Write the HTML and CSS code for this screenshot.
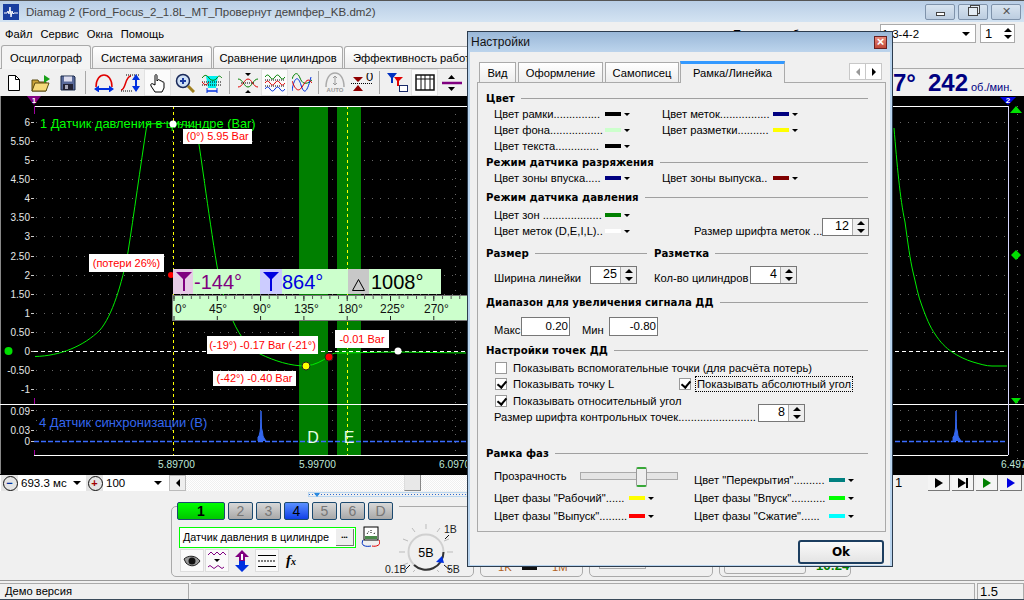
FILE: index.html
```html
<!DOCTYPE html>
<html lang="ru">
  <head>
    <meta charset="UTF-8" />
    <title>Diamag 2</title>
    <link rel="stylesheet" href="styles.css">
  </head>
  <body>
    <div class="app">
      <!-- Main window caption -->
      <div class="titlebar">
        <svg class="app-icon" width="16" height="16" viewBox="0 0 16 16">
          <rect width="16" height="16" fill="#1a3fa0" />
          <path d="M1 9h3l1-2 1 3 1-7 1 10 1-6 1 3 1-1h4" fill="none" stroke="#fff" stroke-width="1" />
        </svg>
        <span class="app-name">Diamag 2 (Ford_Focus_2_1.8L_MT_Провернут демпфер_KB.dm2)</span>
        <div class="caption-btns">
          <span class="cap-btn"><i class="cap-min"></i></span>
          <span class="cap-btn"><i class="cap-max"></i></span>
          <span class="cap-btn cap-close">✕</span>
        </div>
      </div>

      <div class="menubar">
        <span>Файл</span><span>Сервис</span><span>Окна</span><span>Помощь</span>
        <span class="order-label">Порядок работы</span>
        <div class="combo order-combo">1-3-4-2<i class="arrow-down"></i></div>
        <div class="combo cyl-spin">1<b class="mini-spin"><i class="tri-up"></i><i class="tri-down"></i></b></div>
      </div>

      <div class="tabs">
        <div class="tab active">Осциллограф</div>
        <div class="tab t-ign">Система зажигания</div>
        <div class="tab t-cmp">Сравнение цилиндров</div>
        <div class="tab t-eff">Эффективность работы</div>
      </div>

      <!-- Toolbar -->
      <div class="toolbar">
        <span class="tb"><svg width="14" height="16" viewBox="0 0 14 16"><path d="M1.5.5h7l4 4v11h-11z" fill="#fff" stroke="#000"/><path d="M8.5.5v4h4" fill="none" stroke="#000"/></svg></span>
        <span class="tb"><svg width="20" height="18" viewBox="0 0 20 18"><path d="M1 6h6l1 2h7v9H1z" fill="#c9a23a" stroke="#5a4a10"/><path d="M1 17l3-8h14l-3 8z" fill="#f5d97a" stroke="#5a4a10"/><path d="M13 1v8l6-4z" fill="#18a018"/></svg></span>
        <span class="tb"><svg width="16" height="16" viewBox="0 0 16 16"><path d="M1 1h13l1 1v13H1z" fill="#5a6a9a" stroke="#1a2a4a"/><rect x="4" y="1.500" width="8" height="5" fill="#dde"/><rect x="3" y="9" width="10" height="6" fill="#223"/><rect x="5" y="10" width="3" height="4" fill="#aab"/></svg></span>
        <i class="tb-sep"></i>
        <span class="tb"><svg width="20" height="18" viewBox="0 0 20 18"><path d="M2 13C2 5 6 1 10 1s8 4 8 12" fill="none" stroke="#e00000" stroke-width="1.500"/><path d="M2 15h16" stroke="#0030e0" stroke-width="2"/><path d="M0 15l5-3.500v7zM20 15l-5-3.500v7z" fill="#0030e0"/></svg></span>
        <span class="tb"><svg width="22" height="20" viewBox="0 0 22 20"><path d="M1 17c5 0 4-14 10-14" fill="none" stroke="#e00000" stroke-width="1.500"/><path d="M6 2h14M1 18h12" stroke="#000" stroke-dasharray="1 1"/><path d="M16 5v10" stroke="#0030e0" stroke-width="2"/><path d="M16 1l-4 6h8zM16 19l-4-6h8z" fill="#0030e0"/></svg></span>
        <span class="tb tb-on"><svg width="18" height="20" viewBox="0 0 18 20"><path d="M6 12V3c0-2 2-2 2 0v5l1-1c1-1 2 0 2 1 1-1 2 0 2 1 1-.500 2 0 2 1v5l-2 4H6l-4-6c-1-2 1-3 2-2z" fill="#fff" stroke="#000"/></svg></span>
        <span class="tb"><svg width="20" height="20" viewBox="0 0 20 20"><circle cx="8" cy="8" r="6.500" fill="#cfe0f5" stroke="#1a2a5a" stroke-width="1.500"/><path d="M5 8h6M8 5v6" stroke="#1a3aa0" stroke-width="2"/><path d="M13 13l6 6" stroke="#a08020" stroke-width="3"/></svg></span>
        <span class="tb"><svg width="20" height="20" viewBox="0 0 20 20"><path d="M4 3h12l-2 12H6z" fill="#00f0f0"/><path d="M0 5c3-4 5-3 7 0s6 3 8 0 3-2 5 0" fill="none" stroke="#008000"/><path d="M0 9h20M0 12h20" stroke="#000" stroke-dasharray="1 1"/><path d="M0 9c3 4 5 3 7 0" fill="none" stroke="#e00000"/><path d="M5 18h10" stroke="#0030e0" stroke-width="1.500"/><path d="M5 15v5M15 15v5" stroke="#0030e0"/></svg></span>
        <i class="tb-sep"></i>
        <span class="tb"><svg width="20" height="20" viewBox="0 0 20 20"><path d="M0 6c5 0 6 8 10 8s5-8 10-8" fill="none" stroke="#008000"/><path d="M0 14c5 0 6-8 10-8s5 8 10 8" fill="none" stroke="#e00000"/><path d="M3 10h14" stroke="#000" stroke-dasharray="1 1"/><path d="M7 0h6l-3 3zM7 20h6l-3-3z" fill="#000"/></svg></span>
        <span class="tb tb-on"><svg width="20" height="20" viewBox="0 0 20 20"><path d="M0 4q2.500-4 5 0t5 0 5 0 5 0" fill="none" stroke="#008000"/><path d="M0 10q2.500-4 5 0t5 0 5 0 5 0" fill="none" stroke="#e00000"/><path d="M0 16q2.500-4 5 0t5 0 5 0 5 0" fill="none" stroke="#0030e0"/><path d="M0 7h20M0 13h20" stroke="#000" stroke-dasharray="1 1"/></svg></span>
        <span class="tb"><svg width="20" height="20" viewBox="0 0 20 20"><path d="M0 6c3-8 6-6 8-1s5 8 12 2" fill="none" stroke="#008000"/><path d="M0 18C2 4 6 2 9 12s6 8 10-8" fill="none" stroke="#0030e0"/><path d="M0 8c3 8 6 12 10 6s6-10 10-4" fill="none" stroke="#e00000"/></svg></span>
        <i class="tb-sep tb-sep-narrow"></i>
        <span class="tb"><svg width="20" height="21" viewBox="0 0 20 21"><path d="M1 15C1 6 5 1 10 1s9 5 9 14" fill="none" stroke="#aaa" stroke-width="1.500"/><path d="M10 4v9M8 6l2-2 2 2M8 11l2 2 2-2" fill="none" stroke="#999"/><text class="auto-text" x="10" y="20">AUTO</text></svg></span>
        <span class="tb tb-zero"><svg width="22" height="20" viewBox="0 0 22 20"><path d="M2 4h10l-5 5zM2 18h10l-5-6z" fill="#900000"/><path d="M0 10.500h22" stroke="#000" stroke-dasharray="1 1"/><text class="zero-text" x="15" y="8">0</text></svg></span>
        <i class="tb-sep"></i>
        <span class="tb"><svg width="22" height="22" viewBox="0 0 22 22"><path d="M0 1h10L6 6v5H4V6z" fill="#0030c0"/><path d="M7 5h9l-4 4v5h-2V9z" fill="#e00000"/><rect x="12.500" y="13.500" width="8" height="6" fill="#fff" stroke="#1a2a6a"/></svg></span>
        <span class="tb tb-on"><svg width="20" height="17" viewBox="0 0 20 17"><rect x="1" y="1" width="18" height="15" fill="#fff" stroke="#111" stroke-width="1.500"/><path d="M1 5h18M6 1v15M10 1v15M15 1v15" stroke="#111"/></svg></span>
        <span class="tb"><svg width="20" height="20" viewBox="0 0 20 20"><path d="M0 10h20" stroke="#800080" stroke-width="2.500"/><path d="M6 6h7l-3.500-4zM6 14h7l-3.500 4z" fill="#000"/></svg></span>
        <div class="rpm"><b class="rpm-a">7°</b><b class="rpm-b">242</b><span>об./мин.</span></div>
      </div>

      <!-- Oscillogram -->
      <svg class="chart" width="1024" height="378" viewBox="0 97 1024 378">
        <defs>
          <pattern id="tickSmall" x="173.500" y="0" width="8.660" height="400" patternUnits="userSpaceOnUse">
            <path d="M.5 0v400" stroke="#555" />
          </pattern>
          <pattern id="tickBig" x="173.500" y="0" width="43.300" height="400" patternUnits="userSpaceOnUse">
            <path d="M.5 0v400" stroke="#222" />
          </pattern>
        </defs>
        <rect x="0" y="97" width="1024" height="378" fill="#000" />
        <rect x="0" y="97" width="1" height="378" fill="#888" />

        <g class="grid">
          <path d="M36 123.500H1005M36 142.500H1005M36 161.500H1005M36 180.500H1005M36 199.500H1005M36 218.500H1005M36 237.500H1005M36 257.500H1005M36 276.500H1005M36 295.500H1005M36 314.500H1005M36 333.500H1005M36 371.500H1005M36 390.500H1005M36 411.500H1005M36 421.500H1005M36 431.500H1005" />
          <path d="M455.500 107V456M1017.500 107V470" />
        </g>

        <rect x="299" y="107" width="29" height="349" fill="#007f00" />
        <rect x="337" y="107" width="24" height="349" fill="#007f00" />

        <path d="M173.500 107V456M347.500 107V456" class="dash-yellow" />
        <path d="M34 352.500H1005" class="dash-white" />
        <path d="M34 442.500H1005" class="dash-blue" />

        <path d="M34 107.500H1008M0 405.500H1024M34 456.500H1008" class="frame" />
        <path d="M1008.500 107V456" class="frame-right" />
        <path d="M34.500 107v8M34.500 399v6M34.500 451v5" class="frame-purple" />
        <path d="M31 123.500h3M31 142.500h3M31 161.500h3M31 180.500h3M31 199.500h3M31 218.500h3M31 237.500h3M31 257.500h3M31 276.500h3M31 295.500h3M31 314.500h3M31 333.500h3M31 352.500h3M31 371.500h3M31 390.500h3M31 411.500h3M31 431.500h3M31 442.500h3" class="ticks" />

        <path d="M27 97h14l-7 9z" fill="#800080" />
        <text x="34" y="103.500" class="flag-num">1</text>
        <path d="M1000 98h16l-8 8z" fill="#0000e0" />
        <text x="1008" y="104" class="flag-num">2</text>

        <g class="ylabels">
          <text x="30" y="127">6</text>
          <text x="30" y="146">5.50</text>
          <text x="30" y="165">5</text>
          <text x="30" y="184">4.50</text>
          <text x="30" y="203">4</text>
          <text x="30" y="222">3.50</text>
          <text x="30" y="241">3</text>
          <text x="30" y="261">2.50</text>
          <text x="30" y="280">2</text>
          <text x="30" y="299">1.50</text>
          <text x="30" y="318">1</text>
          <text x="30" y="337">0.50</text>
          <text x="30" y="356">0</text>
          <text x="30" y="375">-0.50</text>
          <text x="30" y="394">-1</text>
          <text x="30" y="416">0.09</text>
          <text x="30" y="435">0.03</text>
          <text x="30" y="446">0</text>
        </g>
        <g class="xlabels">
          <text x="158" y="469">5.89700</text>
          <text x="299" y="469">5.99700</text>
          <text x="439" y="469">6.09700</text>
          <text x="1001" y="469">6.497</text>
        </g>

        <text x="40" y="129" class="legend-green">1 Датчик давления в цилиндре (Bar)</text>
        <text x="39" y="428" class="legend-blue">4 Датчик синхронизации (B)</text>

        <path class="curve" d="M35 357.500C60 357 84 347 100 331C112 317 122 285 128 253C134 215 140 170 147 125L173 124L196 128C200 147 208 213 217 267C222 295 228 312 233 322C240 338 250 350 260 355C275 362 290 367 306 367C315 366 322 362 328 358C331 355 334 354 337 354L397 353L466 354" />
        <path class="curve" d="M894 129C897 165 900 200 905 223C908 245 910 260 913 273C916 285 918 297 922 307C926 318 930 328 935 335C940 343 946 349 952 353C958 357 966 361 973 363C980 365 986 367 992 367L1007 367" />

        <path class="pulse" d="M258 442v-4l1-1 1-4 .5-4 .5-17 .5 17 1 4 .5 4 1 2 2 3" />
        <path class="pulse" d="M953 442v-4l1-1 1-4 .5-4 .5-17 .5 17 1 4 .5 4 1 2 2 3" />

        <circle cx="8.500" cy="352" r="4" fill="#00e000" />
        <path d="M1016 107l6 7h-12zM1016 251l5 5-5 5-5-5zM1016 405l-5-6h10z" fill="#00e000" />

        <text x="313" y="444" class="zone-letter">D</text>
        <text x="349" y="444" class="zone-letter">E</text>

        <g class="mark-box">
          <rect x="183" y="130" width="69" height="15" />
          <rect x="89" y="255" width="75" height="18" />
          <rect x="207" y="337" width="111" height="18" />
          <rect x="335" y="331" width="54" height="18" />
          <rect x="213" y="372" width="83" height="15" />
        </g>
        <g class="mark-text">
          <text x="217.500" y="141">(0°) 5.95 Bar</text>
          <text x="126.500" y="268">(потери 26%)</text>
          <text x="262.500" y="350">(-19°) -0.17 Bar (-21°)</text>
          <text x="362" y="344">-0.01 Bar</text>
          <text x="254.500" y="383">(-42°) -0.40 Bar</text>
        </g>

        <circle cx="173" cy="125" r="3.500" fill="#fff" />
        <circle cx="306" cy="367" r="4" fill="#ffff00" stroke="#222" />
        <circle cx="329" cy="358" r="4" fill="#ff0000" stroke="#222" />
        <circle cx="398" cy="352" r="3.500" fill="#fff" />
        <circle cx="171" cy="276" r="3" fill="#ff0000" />

        <!-- degree ruler -->
        <rect x="173" y="270" width="268" height="25" fill="#ccffcc" />
        <rect x="173" y="270" width="20" height="25" fill="#e6cce6" />
        <rect x="260" y="270" width="22" height="25" fill="#ccccff" />
        <rect x="348" y="270" width="21" height="25" fill="#c8c8c8" />
        <path d="M176 273h16l-7 7v12h-2v-12z" fill="#800080" />
        <path d="M263 273h16l-7 7v12h-2v-12z" fill="#0000e0" />
        <path d="M352.500 291.500l6-11 6 11z" fill="none" stroke="#000" />
        <text x="194" y="290" class="info info-p">-144°</text>
        <text x="282" y="290" class="info info-b">864°</text>
        <text x="371" y="290" class="info info-k">1008°</text>

        <rect x="172.500" y="296.500" width="295" height="25" fill="#ccffcc" stroke="#777" />
        <rect x="173" y="297" width="294" height="3" fill="url(#tickSmall)" />
        <rect x="173" y="297" width="294" height="5" fill="url(#tickBig)" />
        <rect x="173" y="317" width="294" height="4" fill="url(#tickBig)" />
        <g class="ruler-text">
          <text x="175" y="314">0°</text>
          <text x="209" y="314">45°</text>
          <text x="253" y="314">90°</text>
          <text x="294" y="314">135°</text>
          <text x="338" y="314">180°</text>
          <text x="380" y="314">225°</text>
          <text x="424" y="314">270°</text>
        </g>
      </svg>

      <!-- Time scale / scroll -->
      <div class="scrollrow">
        <span class="round-btn minus">−</span>
        <div class="combo-flat w-time">693.3 мс<i class="arrow-down"></i></div>
        <span class="round-btn plus">+</span>
        <div class="combo-flat w-pct">100<i class="arrow-down"></i></div>
        <span class="sb-btn"><i class="tri-left"></i></span>
        <div class="track"><span class="thumb"></span></div>
        <span class="page-no">1</span>
        <div class="players">
          <span class="play"><i class="tri-play"></i></span>
          <span class="play"><i class="tri-play"></i><i class="bar"></i></span>
          <span class="play"><i class="tri-play green"></i></span>
          <span class="play"><i class="tri-play blue"></i></span>
        </div>
      </div>

      <div class="lower">
        <div class="range-strip"><i class="tri-strip"></i></div>
        <div class="groups">
          <div class="group g-chan">
            <div class="chan-col">
              <div class="channels">
                <span class="chan first">1</span>
                <span class="chan">2</span>
                <span class="chan">3</span>
                <span class="chan on">4</span>
                <span class="chan">5</span>
                <span class="chan">6</span>
                <span class="chan">D</span>
              </div>
              <div class="sensor-row">
                <div class="sensor">Датчик давления в цилиндре<span class="dots">•••</span></div>
                <svg width="20" height="22" viewBox="0 0 20 22"><rect x="4" y="1" width="14" height="13" fill="#fff" stroke="#000"/><path d="M5 13h12v-3H5z" fill="#4a8a4a"/><path d="M7 8l2-3M11 4v3M14 8l1-2" stroke="#000" stroke-dasharray="1 1"/><path d="M3 14c-3 6 3 7 8 6" fill="none" stroke="#0030c0"/><path d="M19 14c3 5-3 7-7 6" fill="none" stroke="#e00000"/></svg>
              </div>
              <div class="ch-tools">
                <span class="ch-tool on"><svg width="18" height="14" viewBox="0 0 18 14"><path d="M1 5c4-4 12-4 16 2-4 6-10 6-14 2z" fill="#999" stroke="#222"/><circle cx="9" cy="7" r="3.500" fill="#111"/></svg></span>
                <span class="ch-tool on"><svg width="20" height="20" viewBox="0 0 20 20"><path d="M1 4l3-3 3 3 3-3 3 3 3-3 3 3M1 16q2-3 4 0t4 0 4 0 4 0" fill="none" stroke="#800080"/><path d="M7 8h6l-3 3z" fill="#000"/></svg></span>
                <span class="ch-tool"><svg width="18" height="22" viewBox="0 0 18 22"><path d="M9 0l7 7h-4v4H6V7H2z" fill="#800080"/><path d="M9 22l7-7h-4v-4H6v4H2z" fill="#0030e0"/><path d="M8 4h2v6H8z" fill="#fff"/></svg></span>
                <span class="ch-tool on"><svg width="20" height="16" viewBox="0 0 20 16"><path d="M1 2.500h18M1 13.500h18" stroke="#000"/><path d="M1 8h18" stroke="#000" stroke-dasharray="2 1"/></svg></span>
                <span class="fx">f<small>x</small></span>
              </div>
            </div>
            <svg class="knob" width="92" height="66" viewBox="381 514 92 66">
              <path d="M426 530v-5M415 533l-3-4M437 533l3-4M408 542l-5-2M444 542l5-2M405 553h-6M447 553h6M408 564l-5 2M415 571l-2 2M437 571l2 2" stroke="#bbb" />
              <path d="M445 540l4-4M444 566l6 5M410 566l-4 4" stroke="#111" />
              <circle cx="426" cy="553" r="17.500" fill="none" stroke="#d0d0d0" stroke-width="2" />
              <path d="M443.500 553A17.500 17.500 0 0 1 414 566" fill="none" stroke="#333" stroke-width="2" />
              <path d="M436 563l6-6 2 7z" fill="#0030e0" />
              <text x="426" y="558" class="knob-mid">5В</text>
              <text x="444" y="534" class="knob-lab">1В</text>
              <text x="385" y="574" class="knob-lab">0.1В</text>
              <text x="447" y="574" class="knob-lab">5В</text>
            </svg>
          </div>
          <div class="group g-a"><span class="ga-k">1K</span><i class="ga-bar"></i><span class="ga-m">1M</span></div>
          <div class="group g-b"><i class="gb-box"></i></div>
          <div class="group g-c"><i class="gc-box"></i><span class="gc-time">16:24</span></div>
        </div>
      </div>

      <div class="statusbar">
        <div class="st-cell st-a">Демо версия</div>
        <div class="st-cell st-b"></div>
        <div class="st-cell st-c">1.5</div>
      </div>

      <!-- Settings dialog -->
      <div class="dialog">
        <div class="dlg-title">
          <span>Настройки</span>
          <span class="dlg-close">×</span>
        </div>
        <div class="dlg-tabs">
          <div class="dtab w1">Вид</div>
          <div class="dtab w2">Оформление</div>
          <div class="dtab w3">Самописец</div>
          <div class="dtab w4 active">Рамка/Линейка</div>
          <div class="tab-arrows"><span><i class="tri-left gray"></i></span><span><i class="tri-right"></i></span></div>
        </div>
        <div class="panel">
          <div class="sec"><b>Цвет</b><hr /></div>
          <div class="cols">
            <div class="clr"><label>Цвет рамки...............</label><i class="sw" style="background:#000"></i><i class="arr"></i></div>
            <div class="clr"><label>Цвет меток................</label><i class="sw" style="background:#000080"></i><i class="arr"></i></div>
            <div class="clr"><label>Цвет фона.................</label><i class="sw" style="background:#ccffcc"></i><i class="arr"></i></div>
            <div class="clr"><label>Цвет разметки..........</label><i class="sw" style="background:#ffff00"></i><i class="arr"></i></div>
            <div class="clr"><label>Цвет текста..............</label><i class="sw" style="background:#000"></i><i class="arr"></i></div>
          </div>
          <div class="sec"><b>Режим датчика разряжения</b><hr /></div>
          <div class="cols">
            <div class="clr"><label>Цвет зоны впуска.....</label><i class="sw" style="background:#000080"></i><i class="arr"></i></div>
            <div class="clr"><label>Цвет зоны выпуска..</label><i class="sw" style="background:#800000"></i><i class="arr"></i></div>
          </div>
          <div class="sec sec-press"><b>Режим датчика давления</b><hr /></div>
          <div class="press">
            <div class="press-colors">
              <div class="clr"><label>Цвет зон ...................</label><i class="sw" style="background:#008000"></i><i class="arr"></i></div>
              <div class="clr"><label>Цвет меток (D,E,I,L)..</label><i class="sw" style="background:#fff"></i><i class="arr"></i></div>
            </div>
            <div class="press-font">
              <label>Размер шрифта меток ....</label>
              <div class="spin"><span>12</span><b><i class="tri-up"></i><i class="tri-down"></i></b></div>
            </div>
          </div>
          <div class="sec-pair">
            <div class="sec"><b>Размер</b><hr /></div>
            <div class="sec"><b>Разметка</b><hr /></div>
          </div>
          <div class="size-row">
            <label>Ширина линейки</label>
            <div class="spin"><span>25</span><b><i class="tri-up"></i><i class="tri-down"></i></b></div>
            <label class="l2">Кол-во цилиндров</label>
            <div class="spin"><span>4</span><b><i class="tri-up"></i><i class="tri-down"></i></b></div>
          </div>
          <div class="sec sec-range"><b>Диапазон для увеличения сигнала ДД</b><hr /></div>
          <div class="range-row">
            <label>Макс</label><span class="num">0.20</span>
            <label class="l2">Мин</label><span class="num">-0.80</span>
          </div>
          <div class="sec sec-points"><b>Настройки точек ДД</b><hr /></div>
          <div class="chk"><i class="box"></i><span>Показывать вспомогательные точки (для расчёта потерь)</span></div>
          <div class="chk"><i class="box on"></i><span class="chk-l">Показывать точку L</span>
            <i class="box on box-abs"></i><span class="focus">Показывать абсолютный угол</span></div>
          <div class="chk chk-rel"><i class="box on"></i><span>Показывать относительный угол</span></div>
          <div class="cp-font">
            <label>Размер шрифта контрольных  точек.........................</label>
            <div class="spin"><span>8</span><b><i class="tri-up"></i><i class="tri-down"></i></b></div>
          </div>
          <div class="sec sec-phase"><b>Рамка фаз</b><hr /></div>
          <div class="phases">
            <div class="slider-row"><label>Прозрачность</label><div class="slider"><span></span></div></div>
            <div class="clr clr-p ov"><label>Цвет "Перекрытия"..........</label><i class="sw" style="background:#008080"></i><i class="arr"></i></div>
            <div class="clr clr-p"><label>Цвет фазы "Рабочий"......</label><i class="sw" style="background:#ffff00"></i><i class="arr"></i></div>
            <div class="clr clr-p"><label>Цвет фазы "Впуск"...........</label><i class="sw" style="background:#00ff00"></i><i class="arr"></i></div>
            <div class="clr clr-p"><label>Цвет фазы "Выпуск".........</label><i class="sw" style="background:#ff0000"></i><i class="arr"></i></div>
            <div class="clr clr-p"><label>Цвет фазы "Сжатие"......</label><i class="sw" style="background:#00ffff"></i><i class="arr"></i></div>
          </div>
        </div>
        <div class="dlg-foot"><button type="button">Ok</button></div>
      </div>
    </div>
  </body>
</html>
```

FILE: styles.css
```css
* {
  box-sizing: border-box;
}
body {
  margin: 0;
  background: #f0f0f0;
  font-family: "Liberation Sans", Arial, sans-serif;
  font-size: 11.2px;
  color: #000;
}
i {
  display: block;
  font-style: normal;
}
.app {
  position: relative;
  width: 1024px;
  height: 600px;
  overflow: hidden;
  display: flex;
  flex-direction: column;
  background: #f0f0f0;
}

/* small triangles */
.tri-up, .tri-down, .tri-left, .tri-right, .arrow-down, .tri-play {
  width: 0;
  height: 0;
  border-style: solid;
  border-color: transparent;
}
.tri-up { border-width: 0 4px 4px; border-bottom-color: #000; }
.tri-down { border-width: 4px 4px 0; border-top-color: #000; }
.tri-left { border-width: 4px 4px 4px 0; border-right-color: #000; }
.tri-right { border-width: 4px 0 4px 4px; border-left-color: #000; }
.tri-left.gray { border-right-color: #999; }
.arrow-down { border-width: 4px 4px 0; border-top-color: #000; }

/* caption */
.titlebar {
  height: 22px;
  flex: none;
  display: flex;
  align-items: center;
  padding-left: 3px;
  border-top: 1px solid #555;
  background: linear-gradient(#b9cee6, #d3e3f2);
}
.app-name {
  margin-left: 7px;
  font-size: 11.500px;
  color: #444;
}
.caption-btns {
  margin-left: auto;
  margin-right: 3px;
  display: flex;
  gap: 3px;
}
.cap-btn {
  width: 30px;
  height: 16px;
  border: 1px solid #7f93ab;
  border-radius: 2px;
  background: linear-gradient(#d8e4f0, #bccde0);
  display: flex;
  align-items: center;
  justify-content: center;
  color: #555;
  font-size: 11px;
}
.cap-min { width: 9px; height: 4px; border: 1px solid #444; background: #fff; margin-top: 5px; }
.cap-max { width: 10px; height: 9px; border: 1px solid #444; background: #e4ecf4; box-shadow: 2px -2px 0 -1px #e4ecf4, 2px -2px 0 0 #444; }

/* menu */
.menubar {
  height: 23px;
  flex: none;
  display: flex;
  align-items: center;
  padding-left: 5px;
  gap: 8px;
}
.order-label {
  position: absolute;
  left: 733px;
  top: 28px;
}
.combo {
  position: absolute;
  top: 24px;
  height: 19px;
  background: #fff;
  border: 1px solid #aaa;
  display: flex;
  align-items: center;
  padding-left: 1px;
  justify-content: space-between;
  font-size: 11.500px;
}
.order-combo { left: 880px; width: 96px; padding-right: 5px; }
.cyl-spin { left: 980px; width: 35px; padding-left: 4px; padding-right: 2px; font-size: 13px; }
.mini-spin { display: flex; flex-direction: column; gap: 3px; }

/* tabs */
.tabs {
  height: 24px;
  flex: none;
  display: flex;
  align-items: flex-end;
  padding-left: 1px;
  gap: 1px;
  border-bottom: 1px solid #aaa;
}
.tab {
  height: 22px;
  border: 1px solid #aaa;
  border-bottom: none;
  border-radius: 3px 3px 0 0;
  background: linear-gradient(#fff, #ececec);
  display: flex;
  align-items: center;
  justify-content: center;
  width: 119px;
}
.tab.active {
  width: 90px;
  height: 24px;
  background: #f4f4f4;
  position: relative;
  top: 1px;
}
.t-ign { width: 120px; }
.t-cmp { width: 130px; }
.t-eff { width: 160px; justify-content: flex-start; padding-left: 8px; }

/* toolbar */
.toolbar {
  height: 27px;
  flex: none;
  display: flex;
  align-items: center;
  position: relative;
}
.tb {
  width: 27px;
  height: 27px;
  flex: none;
  display: flex;
  align-items: center;
  justify-content: center;
}
.tb-on {
  background: #fbfbfb;
  outline: 1px solid #e2e2e2;
  outline-offset: -1px;
}
.tb-sep {
  width: 9px;
  height: 23px;
  flex: none;
  background: linear-gradient(#a8a8a8, #a8a8a8) center / 1px 100% no-repeat;
}
.tb-sep-narrow { width: 6px; }
.auto-text {
  font-size: 6px;
  font-weight: bold;
  fill: #999;
  text-anchor: middle;
}
.zero-text { font-size: 13px; fill: #000; }
.rpm {
  position: absolute;
  left: 893px;
  top: 0;
  height: 27px;
  display: flex;
  align-items: baseline;
  color: #000080;
  line-height: 28px;
  white-space: nowrap;
}
.rpm b { font-size: 24px; }
.rpm-b { margin-left: 12px; }
.rpm span { margin-left: 3px; font-size: 11px; color: #000080; }

/* chart */
.chart {
  display: block;
  flex: none;
}
.grid path { stroke: #666; stroke-dasharray: 1 7; fill: none; }
.dash-yellow { stroke: #ffff00; stroke-dasharray: 3 3; fill: none; }
.dash-white { stroke: #fff; stroke-dasharray: 4 3; fill: none; }
.dash-blue { stroke: #3a6cff; stroke-dasharray: 5 2; stroke-width: 1.500; fill: none; }
.frame { stroke: #fff; fill: none; }
.frame-right { stroke: #d8d8ff; fill: none; }
.frame-purple { stroke: #a000a0; fill: none; }
.ticks { stroke: #ccc; fill: none; }
.flag-num { fill: #fff; font-size: 8px; font-weight: bold; text-anchor: middle; }
.ylabels text { fill: #e4e8e8; font-size: 10px; text-anchor: end; }
.xlabels text { fill: #bfe6d8; font-size: 10.200px; }
.legend-green { fill: #00ff00; font-size: 12.800px; }
.legend-blue { fill: #3366ee; font-size: 13px; }
.curve { fill: none; stroke: #00ee00; stroke-width: 1; }
.pulse { fill: #3366ee; stroke: #3366ee; stroke-width: 1; }
.zone-letter { fill: #e8ffe0; font-size: 16px; text-anchor: middle; }
.mark-box rect { fill: #fff; }
.mark-text text { fill: #ff0000; font-size: 11px; text-anchor: middle; }
.info { font-size: 20px; }
.info-p { fill: #800080; }
.info-b { fill: #0000e0; }
.info-k { fill: #000; }
.ruler-text text { font-size: 12px; fill: #111; }

/* scroll row */
.scrollrow {
  height: 17px;
  flex: none;
  display: flex;
  align-items: stretch;
  background: #fff;
  border-top: 1px solid #000;
  position: relative;
}
.round-btn {
  width: 17px;
  margin-left: 1px;
  flex: none;
  background: #e4e4e4;
  display: flex;
  align-items: center;
  justify-content: center;
  font-weight: bold;
  font-size: 11px;
  line-height: 1;
  position: relative;
}
.round-btn::before {
  content: "";
  position: absolute;
  left: 2px;
  top: 1px;
  width: 13px;
  height: 13px;
  border: 1px solid #111;
  border-radius: 50%;
}
.minus { color: #0030a0; }
.plus { color: #a00000; margin-left: 0; }
.combo-flat {
  background: #fff;
  display: flex;
  align-items: center;
  justify-content: space-between;
  padding: 0 5px 0 3px;
  font-size: 11.500px;
}
.w-time { width: 68px; }
.w-pct { width: 64px; }
.sb-btn {
  width: 17px;
  flex: none;
  margin-left: 2px;
  background: #eee;
  border: 1px solid #bbb;
  display: flex;
  align-items: center;
  justify-content: center;
}
.track {
  width: 700px;
  flex: none;
  position: relative;
  background: repeating-conic-gradient(#f0f0f0 0 25%, #fff 0 50%) 0 0 / 2px 2px;
}
.thumb {
  position: absolute;
  left: 218px;
  top: 0;
  width: 17px;
  height: 16px;
  background: #e8e8e8;
  border-right: 1px solid #888;
  border-bottom: 1px solid #888;
  border-left: 1px solid #ddd;
}
.page-no {
  width: 42px;
  padding-left: 9px;
  font-size: 13px;
  background: #f0f0f0;
  line-height: 16px;
}
.players {
  flex: 1;
  display: flex;
  gap: 2px;
  background: #f0f0f0;
}
.play {
  width: 22px;
  height: 16px;
  background: #f4f4f4;
  border-right: 1px solid #777;
  border-bottom: 1px solid #777;
  display: flex;
  align-items: center;
  justify-content: center;
}
.tri-play { border-width: 5px 0 5px 8px; border-left-color: #000; }
.tri-play.green { border-left-color: #008000; }
.tri-play.blue { border-left-color: #0000e0; }
.bar { width: 2px; height: 10px; background: #000; }

/* lower panel */
.lower {
  height: 90px;
  flex: none;
  position: relative;
  border-bottom: 1px solid #999;
}
.range-strip {
  position: absolute;
  left: 308px;
  top: 1px;
  width: 170px;
  height: 5px;
  border: 1px solid #b9d5ee;
  background: repeating-linear-gradient(90deg, #2a6ad0 0 1px, #f0f0f0 1px 3px) 0 1px / 100% 1px no-repeat;
}
.tri-strip {
  width: 0;
  height: 0;
  margin-left: 5px;
  border-style: solid;
  border-color: transparent;
  border-width: 4px 3px 0;
  border-top-color: #2a8ae0;
}
.groups {
  display: flex;
  padding: 15px 0 0 171px;
  gap: 6px;
}
.group {
  height: 71px;
  border: 1px solid #aaa;
  border-radius: 5px;
  position: relative;
  flex: none;
}
.g-chan { width: 303px; display: flex; }
.g-a { width: 103px; }
.g-b { width: 124px; }
.g-c { width: 132px; }
.chan-col { width: 206px; flex: none; padding-left: 5px; }
.channels {
  display: flex;
  gap: 3px;
  width: 222px;
  margin-top: -5px;
  padding-right: 7px;
  background: #f0f0f0;
}
.chan {
  width: 25px;
  height: 18px;
  flex: none;
  border: 1px solid #1c4a70;
  border-radius: 2px;
  background: linear-gradient(#d8d8d8, #a8a8a8);
  color: #777;
  font-size: 14px;
  line-height: 16px;
  text-align: center;
}
.chan.first {
  width: 48px;
  font-weight: bold;
  color: #000;
  background: linear-gradient(#00ff00, #00c800);
}
.chan.on {
  color: #000;
  background: linear-gradient(#5a90ff, #1040e8);
}
.sensor-row {
  display: flex;
  align-items: center;
  margin: 6px 0 0 2px;
  gap: 4px;
  width: 210px;
}
.sensor {
  width: 177px;
  height: 21px;
  flex: none;
  border: 1px solid #00ff00;
  background: #fff;
  display: flex;
  align-items: center;
  justify-content: space-between;
  padding: 0 1px 0 3px;
  font-size: 10.800px;
  white-space: nowrap;
}
.dots {
  width: 18px;
  height: 17px;
  flex: none;
  background: #eee;
  border-right: 1px solid #777;
  border-bottom: 1px solid #777;
  font-size: 6px;
  line-height: 16px;
  text-align: center;
}
.ch-tools {
  display: flex;
  align-items: center;
  margin: 1px 0 0 3px;
  gap: 1px;
}
.ch-tool {
  width: 24px;
  height: 23px;
  flex: none;
  display: flex;
  align-items: center;
  justify-content: center;
}
.ch-tool.on {
  background: #fafafa;
  border: 1px solid #ddd;
}
.fx {
  margin-left: 6px;
  font-family: "Liberation Serif", serif;
  font-style: italic;
  font-weight: bold;
  font-size: 15px;
}
.fx small { font-size: 10px; }
.knob { margin: 6px 0 0 3px; display: block; }
.knob-mid { font-size: 12.500px; text-anchor: middle; }
.knob-lab { font-size: 10.500px; fill: #222; }

.ga-k { position: absolute; left: 17px; top: 54px; color: #b06020; }
.ga-m { position: absolute; left: 71px; top: 54px; color: #b06020; }
.ga-bar { position: absolute; left: 41px; top: 60px; width: 15px; height: 3px; background: #111; }
.gb-box { position: absolute; left: 9px; top: 50px; width: 47px; height: 12px; border: 1px solid #aaa; }
.gc-box { position: absolute; left: 4px; top: 50px; width: 82px; height: 17px; border: 1px solid #aaa; border-radius: 3px; }
.gc-time { position: absolute; left: 96px; top: 51px; color: #008000; font-weight: bold; font-size: 13px; }

/* status bar */
.statusbar {
  flex: 1;
  display: flex;
  gap: 2px;
  padding-top: 2px;
  border-bottom: 1px solid #3a4a5a;
}
.st-cell {
  border-top: 1px solid #aaa;
  border-right: 1px solid #aaa;
  line-height: 15px;
  padding-left: 5px;
}
.st-a { width: 189px; }
.st-b { flex: 1; }
.st-c { width: 47px; font-size: 13px; border-left: 1px solid #aaa; padding-left: 2px; }

/* dialog */
.dialog {
  position: absolute;
  left: 467px;
  top: 31px;
  width: 426px;
  height: 536px;
  border: 1px solid #2c3c4e;
  padding: 0 2px 2px;
  background: #b9d4ee;
}
.dlg-title {
  height: 20px;
  margin: 0 -2px;
  padding: 0 5px 0 3px;
  display: flex;
  align-items: center;
  justify-content: space-between;
  background: linear-gradient(#9ab8d8, #bcd4ec);
  font-size: 12px;
  color: #111;
}
.dlg-close {
  width: 13px;
  height: 13px;
  border: 1px solid #6a2020;
  background: linear-gradient(#e88878, #c04838);
  color: #fff;
  font-weight: bold;
  font-size: 13px;
  line-height: 10px;
  text-align: center;
}
.dlg-tabs {
  height: 30px;
  padding: 9px 8px 0 9px;
  display: flex;
  align-items: flex-start;
  background: #f0f0f0;
}
.dtab {
  height: 21px;
  margin-top: 1px;
  border: 1px solid #aaa;
  border-bottom: none;
  background: linear-gradient(#fff, #ececec);
  text-align: center;
  line-height: 20px;
  margin-right: 2px;
  flex: none;
  position: relative;
}
.w1 { width: 37px; }
.w2 { width: 85px; }
.w3 { width: 74px; margin-right: 1px; }
.w4 { width: 105px; }
.dtab.active {
  height: 22px;
  margin-top: 0;
  background: #f0f0f0;
  border-top: 3px solid #3399ff;
  line-height: 18px;
  z-index: 1;
}
.tab-arrows {
  margin-left: auto;
  margin-top: 2px;
  width: 33px;
  height: 17px;
  border: 1px solid #c8c8c8;
  background: #fff;
  display: flex;
}
.tab-arrows span {
  flex: 1;
  display: flex;
  align-items: center;
  justify-content: center;
  border-left: 1px solid #c8c8c8;
}
.tab-arrows span:first-child { border-left: none; }
.panel {
  margin: 0;
  height: 483px;
  background: #f0f0f0;
  padding: 8px 16px 0 8px;
  position: relative;
}
.panel::before {
  content: "";
  position: absolute;
  left: 7px;
  top: 0;
  width: 407px;
  height: 448px;
  border: 1px solid #aaa;
  pointer-events: none;
}
label { white-space: nowrap; }
.sec {
  height: 16px;
  display: flex;
  align-items: center;
  margin-left: 8px;
  margin-right: 6px;
  white-space: nowrap;
}
.sec b {
  font-family: "DejaVu Sans", sans-serif;
  font-size: 10.200px;
}
.sec hr {
  flex: 1;
  margin: 0 0 0 6px;
  border: none;
  border-top: 1px solid #a0a0a0;
  height: 0;
}
.cols {
  display: grid;
  grid-template-columns: 168px 1fr;
  grid-auto-rows: 16px;
  margin-left: 16px;
}
.clr {
  display: flex;
  align-items: center;
  height: 16px;
}
.clr label { width: 111px; }
.sw { width: 16px; height: 4px; }
.arr {
  width: 0;
  height: 0;
  margin-left: 3px;
  border-style: solid;
  border-color: transparent;
  border-width: 3px 3px 0;
  border-top-color: #000;
}
.sec-press { margin-top: 3px; }
.press {
  display: flex;
  margin: 2px 0 0 16px;
  height: 32px;
}
.press-colors { width: 200px; }
.press-font {
  display: flex;
  align-items: flex-end;
}
.press-font label { width: 128px; line-height: 16px; }
.press-font .spin { margin-bottom: 3px; }
.spin {
  width: 47px;
  height: 18px;
  flex: none;
  display: flex;
  border: 1px solid #777;
  background: #fff;
  font-size: 12.500px;
}
.spin span {
  flex: 1;
  text-align: right;
  padding-right: 3px;
  line-height: 15px;
}
.spin b {
  width: 16px;
  flex: none;
  background: linear-gradient(#eee 48%, #888 48%, #888 52%, #eee 52%);
  display: flex;
  flex-direction: column;
  align-items: center;
  justify-content: center;
  gap: 4px;
  border-left: 1px solid #aaa;
}
.sec-pair {
  display: flex;
  margin-top: 6px;
}
.sec-pair .sec:first-child { width: 161px; flex: none; margin-right: 7px; margin-left: 8px; }
.sec-pair .sec:last-child { flex: 1; margin-left: 0; }
.size-row {
  display: flex;
  align-items: flex-start;
  margin: 5px 0 0 16px;
  height: 21px;
}
.size-row label { width: 96px; margin-top: 6px; }
.size-row .l2 { margin-left: 17px; }
.sec-range { margin-top: 7px; }
.range-row {
  display: flex;
  align-items: center;
  margin: 7px 0 0 16px;
  height: 19px;
}
.range-row label { width: 27px; margin-top: 6px; }
.range-row .l2 { margin-left: 12px; }
.num {
  width: 49px;
  height: 19px;
  border: 1px solid #777;
  background: #fff;
  text-align: right;
  padding-right: 1px;
  font-size: 11.500px;
  line-height: 16px;
}
.sec-points { margin-top: 6px; }
.chk {
  display: flex;
  align-items: center;
  height: 16px;
  margin: 2px 0 0 17px;
}
.chk + .chk { margin-top: 0; }
.chk-rel { margin-top: 1px !important; }
.box {
  width: 12px;
  height: 12px;
  flex: none;
  margin-right: 6px;
  border: 1px solid #999;
  background: #fff;
  position: relative;
}
.box.on::after {
  content: "";
  position: absolute;
  left: 3px;
  top: 0;
  width: 4px;
  height: 7px;
  border: solid #000;
  border-width: 0 2px 2px 0;
  transform: rotate(40deg);
}
.chk-l { width: 166px; flex: none; }
.box-abs { margin-right: 5px; }
.focus {
  outline: 1px dotted #000;
  padding: 0 1px;
  line-height: 14px;
}
.cp-font {
  display: flex;
  align-items: flex-start;
  height: 16px;
  margin-left: 16px;
}
.cp-font label { width: 264px; line-height: 16px; }
.cp-font .spin { margin-top: -5px; }
.sec-phase { margin-top: 20px; }
.phases {
  display: grid;
  grid-template-columns: 200px 1fr;
  grid-template-rows: 22px 18px 16px;
  margin: 7px 0 0 16px;
}
.clr-p label { width: 135px; }
.clr-p.ov { margin-top: 4px; }
.slider-row { display: flex; align-items: center; height: 16px; }
.slider-row label { width: 86px; }
.slider {
  width: 98px;
  height: 8px;
  border: 1px solid #aaa;
  background: #e4e4e4;
  position: relative;
}
.slider span {
  position: absolute;
  left: 55px;
  top: -6px;
  width: 11px;
  height: 20px;
  background: #eee;
  border: 1px solid #999;
  border-top: 2px solid #38a838;
  border-bottom: 2px solid #38a838;
  border-radius: 2px;
}
.dlg-foot {
  position: absolute;
  right: 8px;
  top: 508px;
}
.dlg-foot button {
  width: 86px;
  height: 24px;
  border: 2px solid #1c3e60;
  border-radius: 3px;
  background: linear-gradient(#fafafa, #e4e4e4);
  font-family: "DejaVu Sans", sans-serif;
  font-weight: bold;
  font-size: 12px;
  padding: 0;
}
```
